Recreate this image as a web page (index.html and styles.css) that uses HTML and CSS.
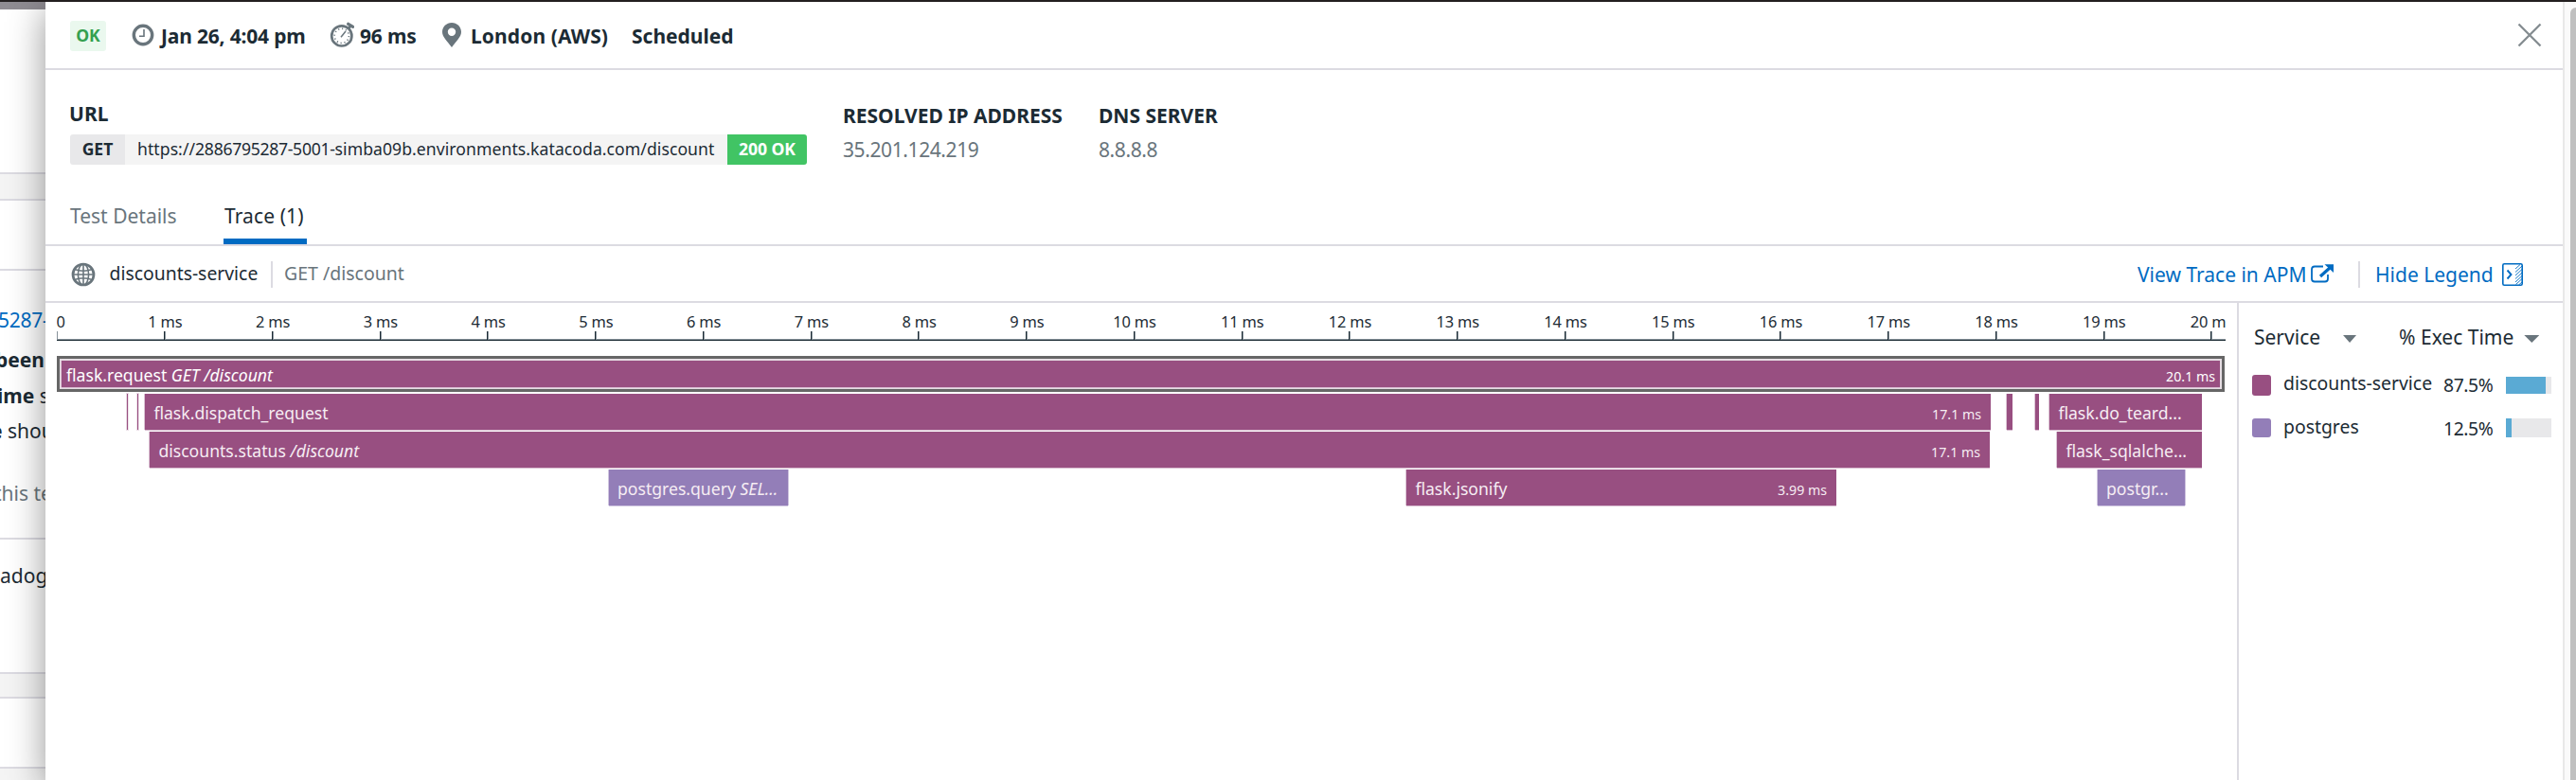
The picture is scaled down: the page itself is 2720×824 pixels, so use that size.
FILE: index.html
```html
<!DOCTYPE html>
<html lang="en">
<head>
<meta charset="utf-8">
<title>Test result – Trace</title>
<link rel="stylesheet" href="styles.css">
</head>
<body>
<div class="topbar"></div>
<div class="app">
  <aside class="under">
    <div class="under-bar"></div>
    <div class="u-block u-first"></div>
    <div class="u-gap u-gap1"></div>
    <div class="u-block u-head"></div>
    <div class="u-block u-message">
      <p class="u-link">5287-</p>
      <p class="u-been"><b>been</b></p>
      <p class="u-time"><b>ime</b> s</p>
      <p class="u-shou"><b>e</b> shou</p>
      <p class="u-test">this te</p>
    </div>
    <div class="u-block u-dog"><p>adog</p></div>
    <div class="u-gap u-gap2"></div>
    <div class="u-block u-last"></div>
    <div class="u-gap u-gap3"></div>
  </aside>

  <main class="panel">
    <header class="head">
      <span class="badge-ok">OK</span>
      <div class="meta meta-date">
        <svg class="i-clock" width="24" height="24" viewBox="0 0 24 24"><circle cx="12" cy="12" r="9.7" fill="none" stroke="#69757c" stroke-width="3.400"/><path d="M13 6v7.200H8" fill="none" stroke="#69757c" stroke-width="1.600"/></svg>
        <b>Jan 26, 4:04 pm</b>
      </div>
      <div class="meta meta-time">
        <svg class="i-watch" width="26" height="28" viewBox="0 0 26 28"><circle cx="12.800" cy="14.900" r="10.600" fill="none" stroke="#69757c" stroke-width="2.700"/><circle cx="12.800" cy="14.900" r="7.600" fill="none" stroke="#69757c" stroke-width="1.600" stroke-dasharray="1.200 2.780"/><path d="M12 16.200l5-6.200" stroke="#69757c" stroke-width="1.500"/><path d="M19.500 8L22 4.500" stroke="#69757c" stroke-width="3"/><path d="M19.700 2.300l5 3.100" stroke="#69757c" stroke-width="3.200" stroke-linecap="round"/></svg>
        <b>96 ms</b>
      </div>
      <div class="meta meta-place">
        <svg class="i-pin" width="20" height="26" viewBox="0 0 20 26"><path fill="#69757c" fill-rule="evenodd" d="M10 0C4.400 0 0 4.400 0 9.800 0 15 5.500 20 10 26c4.500-6 10-11 10-16.200C20 4.400 15.600 0 10 0zm0 5.600a4.200 4.200 0 1 1 0 8.400 4.200 4.200 0 0 1 0-8.400z"/></svg>
        <b>London (AWS)</b>
      </div>
      <div class="meta"><b>Scheduled</b></div>
      <svg class="i-close" width="26" height="26" viewBox="0 0 26 26"><path d="M1.500 1.500l23 23M24.500 1.500l-23 23" stroke="#848c90" stroke-width="2.300"/></svg>
    </header>

    <section class="summary">
      <div class="col-url">
        <h3>URL</h3>
        <div class="url"><b class="verb">GET</b><span class="addr">https://<span class="num">2886795287-5001-</span>simba09b.environments.katacoda.com/discount</span><b class="code">200 OK</b></div>
      </div>
      <div class="col-ip"><h3>RESOLVED IP ADDRESS</h3><p>35.201.124.219</p></div>
      <div class="col-dns"><h3>DNS SERVER</h3><p>8.8.8.8</p></div>
    </section>

    <nav class="tabs"><a class="tab">Test Details</a><a class="tab active">Trace (1)</a></nav>

    <section class="bar">
      <svg class="i-globe" width="26" height="26" viewBox="0 0 26 26" fill="none" stroke="#69757c"><circle cx="13" cy="13" r="11" stroke-width="2.700"/><ellipse cx="13" cy="13" rx="5.600" ry="11" stroke-width="1.600"/><path d="M13 2v22M2 13h22M3.500 7.600q9.500 3.200 19 0M3.500 18.400q9.500-3.200 19 0" stroke-width="1.600"/></svg>
      <span class="svc">discounts-service</span>
      <span class="rule"></span>
      <span class="res">GET /discount</span>
      <a class="link apm">View Trace in APM</a>
      <svg class="i-ext" width="24" height="20" viewBox="0 0 24 20" fill="none" stroke="#006bc2"><path d="M13 2.500H4Q1 2.500 1 5.500v10q0 3 3 3h11q3 0 3-3V11" stroke-width="1.800"/><path d="M10 13L20 4" stroke-width="3.200"/><path d="M14.500 .3H24V9z" fill="#006bc2" stroke="none"/></svg>
      <span class="rule rule2"></span>
      <a class="link hide">Hide Legend</a>
      <svg class="i-legend" width="22" height="24" viewBox="0 0 22 24" fill="none" stroke="#006bc2"><path d="M14 6l5-4.500M14 9.500l7-6.500M14 13l7-6.500M14 16.500l7-6.500M14 20l7-6.500M14.500 22.500l6.500-6M17.500 23l3.500-3" stroke-width=".9"/><rect x=".8" y=".8" width="20.400" height="22.400" rx="1.500" stroke-width="1.600"/><path d="M5.500 7.500l4 4.500-4 4.500" stroke-width="1.900"/></svg>
    </section>

    <section class="content">
      <div class="flame">
        <div class="axis">
          <div class="ticks">
            <span class="zero">0</span><span>1 ms</span><span>2 ms</span><span>3 ms</span><span>4 ms</span><span>5 ms</span><span>6 ms</span><span>7 ms</span><span>8 ms</span><span>9 ms</span><span>10 ms</span><span>11 ms</span><span>12 ms</span><span>13 ms</span><span>14 ms</span><span>15 ms</span><span>16 ms</span><span>17 ms</span><span>18 ms</span><span>19 ms</span><span>20 ms</span>
          </div>
        </div>
        <div class="row first">
          <div class="root"><div class="span"><span class="name">flask.request <i>GET /discount</i></span><span class="dur">20.1 ms</span></div></div>
        </div>
        <div class="row">
          <div class="span thin" style="margin-left:74px;width:1px"></div>
          <div class="span thin" style="margin-left:10px;width:1px"></div>
          <div class="span" style="margin-left:7px;width:1949px"><span class="name">flask.dispatch_request</span><span class="dur">17.1 ms</span></div>
          <div class="span" style="margin-left:17px;width:6px"></div>
          <div class="span" style="margin-left:24px;width:4px"></div>
          <div class="span" style="margin-left:11px;width:161px"><span class="name">flask.do_teard...</span></div>
        </div>
        <div class="row">
          <div class="span" style="margin-left:98px;width:1943px"><span class="name">discounts.status <i>/discount</i></span><span class="dur">17.1 ms</span></div>
          <div class="span" style="margin-left:71px;width:153px"><span class="name">flask_sqlalche...</span></div>
        </div>
        <div class="row">
          <div class="span pg" style="margin-left:583px;width:189px"><span class="name">postgres.query <i>SEL...</i></span></div>
          <div class="span" style="margin-left:653px;width:454px"><span class="name">flask.jsonify</span><span class="dur">3.99 ms</span></div>
          <div class="span pg" style="margin-left:276px;width:92px"><span class="name">postgr...</span></div>
        </div>
      </div>
      <aside class="legend">
        <div class="lhead"><span>Service</span><i class="caret c1"></i><span>% Exec Time</span><i class="caret c2"></i></div>
        <div class="lrow"><i class="sw"></i><span class="lname">discounts-service</span><span class="pct">87.5%</span><div class="meter"><div class="fill" style="width:87.5%"></div></div></div>
        <div class="lrow lrow2"><i class="sw sw2"></i><span class="lname">postgres</span><span class="pct">12.5%</span><div class="meter"><div class="fill" style="width:12.5%"></div></div></div>
      </aside>
    </section>
  </main>
  <div class="scroll"><div class="thumb"></div></div>
</div>
</body>
</html>
```
FILE: styles.css
```css
* { box-sizing: border-box; }
body { margin: 0; width: 2720px; height: 824px; overflow: hidden; background: #fff; color: #1c2b34; font: 21px/30px "Noto Sans", sans-serif; display: flex; flex-direction: column; }
h3, p { margin: 0; }
svg { display: block; flex: none; }
.topbar { height: 2px; background: #231f20; position: relative; z-index: 2; flex: none; }
.app { display: flex; height: 822px; }

/* page behind the panel */
.under { width: 48px; flex: none; overflow: hidden; white-space: nowrap; line-height: 38px; }
.under-bar { height: 8px; background: #8f8c92; }
.u-gap { background: #f4f4f4; border: 2px solid #dcdbe2; border-width: 2px 0; }
.u-first { height: 172px; }
.u-gap1 { height: 30px; }
.u-head { height: 74px; border-bottom: 2px solid #dcdbe2; }
.u-message { height: 284px; padding-top: 33px; border-bottom: 2px solid #dcdbe2; }
.u-link { color: #006bc2; margin-left: -2px; letter-spacing: -.3px; }
.u-been { margin: 4px 0 0 -5px; }
.u-time { margin-left: -3px; }
.u-shou { margin: -1px 0 0 -10px; }
.u-test { color: #69757c; margin: 28px 0 0 -6px; }
.u-dog { height: 140px; padding: 19px 0 0 0; }
.u-gap2 { height: 28px; }
.u-last { height: 72px; }
.u-gap3 { height: 20px; border-bottom: 0; }

.panel { width: 2658px; flex: none; background: #fff; box-shadow: 0 8px 36px rgba(0,0,0,.42); display: flex; flex-direction: column; position: relative; }
.head { height: 72px; border-bottom: 2px solid #dcdbe2; display: grid; grid-template-columns: 65px 209px 119px 200px 1fr 26px; padding: 20px 22px 0 26px; align-items: start; flex: none; }
.badge-ok { width: 38px; height: 32px; border-radius: 3px; background: #eaf8ee; color: #34a050; font-weight: bold; font-size: 17.600px; line-height: 30px; text-align: center; }
.meta { display: flex; margin-top: 1px; white-space: nowrap; }
.meta svg { margin-right: 7px; }
.meta-date { letter-spacing: -.18px; }
.meta-time { letter-spacing: -.2px; }
.i-clock { margin-top: 2px; }
.meta .i-watch { margin-right: 6px; }
.meta .i-pin { margin: 1px 10px 0 0; }
.meta-place { letter-spacing: .1px; }
.i-close { margin-top: 2px; }

.summary { height: 142px; flex: none; display: grid; grid-template-columns: 816px 270px 1fr; padding-left: 26px; }
h3 { font-size: 21px; }
.col-url { padding-top: 31px; }
.col-url h3 { margin-left: -1px; }
.url { display: flex; margin-top: 7px; height: 32px; width: 778px; font-size: 17.600px; border-radius: 3px; overflow: hidden; line-height: 31px; }
.verb { width: 58px; background: #e8e8ea; text-align: center; }
.addr { flex: 1; background: #f4f4f4; padding-left: 13px; white-space: nowrap; letter-spacing: .06px; }
.num { letter-spacing: -.3px; }
.code { width: 84px; background: #41c464; color: #fff; text-align: center; letter-spacing: -.1px; }
.col-ip, .col-dns { padding-top: 33px; }
.col-ip p, .col-dns p { color: #69757c; margin-top: 6px; letter-spacing: -.4px; }

.tabs { height: 44px; flex: none; border-bottom: 2px solid #dcdbe2; padding-left: 26px; display: flex; }
.tab { height: 42px; line-height: 24px; margin-right: 50px; color: #69757c; width: 112px; white-space: nowrap; }
.tab.active { color: #1c2b34; border-bottom: 6px solid #006bc2; width: 88px; padding-left: 1px; letter-spacing: .1px; }

.bar { height: 60px; flex: none; border-bottom: 2px solid #dcdbe2; display: flex; align-items: center; padding: 2px 42px 0 27px; }
.svc { font-size: 19.350px; margin-left: 14px; width: 171px; padding-left: .6px; padding-bottom: 3px; }
.rule { width: 2px; height: 28px; background: #dcdbe2; }
.res { font-size: 19.500px; color: #69757c; margin-left: 12px; padding-bottom: 3px; }
.link { color: #006bc2; white-space: nowrap; }
.apm { margin-left: auto; width: 183px; }
.i-ext { margin: 0 26px 2px 0; }
.hide { margin-left: 16px; width: 134px; }

.content { flex: 1; display: flex; min-height: 0; }
.flame { width: 2314px; flex: none; padding-left: 12px; }
.axis { width: 2290px; height: 40px; overflow: hidden; border-bottom: 1px solid #1c2b34; box-shadow: inset 0 -1px #87929a; }
.ticks { display: flex; margin-left: -56.400px; font-size: 16.400px; letter-spacing: -.15px; }
.ticks span { flex: none; width: 113.750px; height: 38px; text-align: center; line-height: 39px; white-space: nowrap; }
.ticks span::after { content: ""; display: block; width: 2px; height: 9px; margin: -9px auto 0; background: linear-gradient(90deg, #1c2b34 50%, #87929a 50%); }
.ticks .zero { text-align: left; text-indent: 56px; }

.row { display: flex; height: 40px; }
.first { margin-top: 16px; }
.root { width: 2289px; height: 38px; border: 3px solid #666; background: #e6dde3; padding: 2px; }
.span { flex: none; height: 38px; background: #984f81; box-shadow: 0 1px #d8bdd0, -1px 0 #dcc5d5; display: flex; justify-content: space-between; align-items: baseline; padding: 0 10px 0 9.400px; line-height: 40px; color: #f6edf3; white-space: nowrap; overflow: hidden; }
.root .span { width: 2279px; height: 28px; padding: 0 5px; line-height: 30px; color: #fff; }
.span:empty { padding: 0; }
.thin { box-shadow: 0 0 0 1px #ecdfe8; }
.pg { background: #937eb8; box-shadow: 0 1px #d0c6e0, -1px 0 #d0c6e0, 1px 0 #d0c6e0; padding-left: 9px; }
.name { font-size: 17.600px; }
.dur { font-size: 14.200px; }

.legend { flex: 1; border-left: 2px solid #dcdbe2; padding-left: 14px; }
.lhead { display: flex; align-items: center; height: 32px; margin: 20px 0 24px; padding-left: 2px; white-space: nowrap; }
.caret { width: 14px; height: 8px; background: #69757c; clip-path: polygon(0 0, 100% 0, 50% 100%); margin-top: 4px; }
.c1 { margin-left: 24px; margin-right: 45px; }
.c2 { width: 16px; margin-left: 11px; }
.lrow { display: grid; grid-template-columns: 33px 169px 66px 48px; height: 46px; align-items: start; white-space: nowrap; }
.sw { width: 20px; height: 22px; border-radius: 3px; background: #984f81; }
.sw2 { height: 20px; background: #937eb8; }
.lname { font-size: 19.400px; line-height: 18px; }
.pct { font-size: 19.300px; line-height: 22px; letter-spacing: -.4px; }
.meter { height: 18px; margin-top: 2px; background: #e8e8ea; }
.lrow2 .meter { height: 20px; margin-top: 0; }
.fill { height: 100%; background: #5aaad4; }

.scroll { width: 14px; flex: none; background: #fafafa; border-left: 2px solid #e8e8e8; padding: 6px 0 0 6px; position: relative; }
.thumb { height: 830px; background: #c0c0c0; border-radius: 6px 0 0 0; }
```
